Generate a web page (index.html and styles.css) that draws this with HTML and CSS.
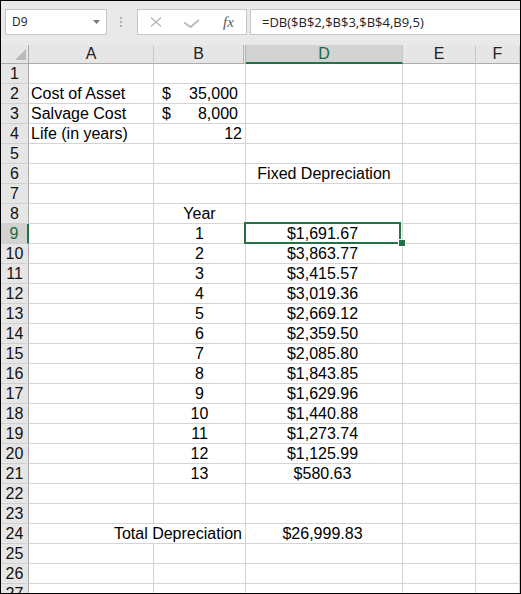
FILE: index.html
```html
<!DOCTYPE html>
<html>
<head>
<meta charset="utf-8">
<link rel="stylesheet" href="styles.css">
</head>
<body>
<div class="app">
  <div class="fbar">
    <div class="namebox"><span>D9</span><svg class="dd" width="7" height="4" viewBox="0 0 7 4"><polygon points="0,0 7,0 3.5,4" fill="#7a7a7a"/></svg></div>
    <div class="dots"><i></i><i></i><i></i></div>
    <div class="btns">
      <svg class="ico-x" width="12" height="10" viewBox="0 0 12 10"><path d="M1 0.5 L11 9.5 M11 0.5 L1 9.5" stroke="#b4b4b4" stroke-width="1.3" fill="none"/></svg>
      <svg class="ico-ok" width="17" height="9" viewBox="0 0 17 9"><polyline points="1,3.5 7.5,8 16,1" stroke="#bcbcbc" stroke-width="2" fill="none"/></svg>
      <span class="fx">fx</span>
    </div>
    <div class="formula">=DB($B$2,$B$3,$B$4,B9,5)</div>
  </div>
  <div class="grid">
    <div class="hd corner"><svg width="11" height="11" viewBox="0 0 11 11"><polygon points="11,0 11,11 0,11" fill="#bababa"/></svg></div>
    <div class="hd">A</div>
    <div class="hd hb">B</div>
    <div class="hd on">D</div>
    <div class="hd">E</div>
    <div class="hd">F</div>

    <div class="rh">1</div><div class="c"></div><div class="c"></div><div class="c"></div><div class="c"></div><div class="c"></div>
    <div class="rh">2</div><div class="c">Cost of Asset</div><div class="c acc"><span>$</span><span>35,000</span></div><div class="c"></div><div class="c"></div><div class="c"></div>
    <div class="rh">3</div><div class="c">Salvage Cost</div><div class="c acc"><span>$</span><span>8,000</span></div><div class="c"></div><div class="c"></div><div class="c"></div>
    <div class="rh">4</div><div class="c">Life (in years)</div><div class="c r">12</div><div class="c"></div><div class="c"></div><div class="c"></div>
    <div class="rh">5</div><div class="c"></div><div class="c"></div><div class="c"></div><div class="c"></div><div class="c"></div>
    <div class="rh">6</div><div class="c"></div><div class="c"></div><div class="c ct">Fixed Depreciation</div><div class="c"></div><div class="c"></div>
    <div class="rh">7</div><div class="c"></div><div class="c"></div><div class="c"></div><div class="c"></div><div class="c"></div>
    <div class="rh">8</div><div class="c"></div><div class="c ct">Year</div><div class="c"></div><div class="c"></div><div class="c"></div>
    <div class="rh on">9</div><div class="c"></div><div class="c ct">1</div><div class="c cm">$1,691.67</div><div class="c"></div><div class="c"></div>
    <div class="rh">10</div><div class="c"></div><div class="c ct">2</div><div class="c cm">$3,863.77</div><div class="c"></div><div class="c"></div>
    <div class="rh">11</div><div class="c"></div><div class="c ct">3</div><div class="c cm">$3,415.57</div><div class="c"></div><div class="c"></div>
    <div class="rh">12</div><div class="c"></div><div class="c ct">4</div><div class="c cm">$3,019.36</div><div class="c"></div><div class="c"></div>
    <div class="rh">13</div><div class="c"></div><div class="c ct">5</div><div class="c cm">$2,669.12</div><div class="c"></div><div class="c"></div>
    <div class="rh">14</div><div class="c"></div><div class="c ct">6</div><div class="c cm">$2,359.50</div><div class="c"></div><div class="c"></div>
    <div class="rh">15</div><div class="c"></div><div class="c ct">7</div><div class="c cm">$2,085.80</div><div class="c"></div><div class="c"></div>
    <div class="rh">16</div><div class="c"></div><div class="c ct">8</div><div class="c cm">$1,843.85</div><div class="c"></div><div class="c"></div>
    <div class="rh">17</div><div class="c"></div><div class="c ct">9</div><div class="c cm">$1,629.96</div><div class="c"></div><div class="c"></div>
    <div class="rh">18</div><div class="c"></div><div class="c ct">10</div><div class="c cm">$1,440.88</div><div class="c"></div><div class="c"></div>
    <div class="rh">19</div><div class="c"></div><div class="c ct">11</div><div class="c cm">$1,273.74</div><div class="c"></div><div class="c"></div>
    <div class="rh">20</div><div class="c"></div><div class="c ct">12</div><div class="c cm">$1,125.99</div><div class="c"></div><div class="c"></div>
    <div class="rh">21</div><div class="c"></div><div class="c ct">13</div><div class="c cm">$580.63</div><div class="c"></div><div class="c"></div>
    <div class="rh">22</div><div class="c"></div><div class="c"></div><div class="c"></div><div class="c"></div><div class="c"></div>
    <div class="rh">23</div><div class="c"></div><div class="c"></div><div class="c"></div><div class="c"></div><div class="c"></div>
    <div class="rh">24</div><div class="c r span2">Total Depreciation</div><div class="c cm">$26,999.83</div><div class="c"></div><div class="c"></div>
    <div class="rh">25</div><div class="c"></div><div class="c"></div><div class="c"></div><div class="c"></div><div class="c"></div>
    <div class="rh">26</div><div class="c"></div><div class="c"></div><div class="c"></div><div class="c"></div><div class="c"></div>
    <div class="rh">27</div><div class="c"></div><div class="c"></div><div class="c"></div><div class="c"></div><div class="c"></div>
  </div>
  <div class="sel"><i class="handle"></i></div>
</div>
</body>
</html>
```

FILE: styles.css
```css
html, body {
  margin: 0;
  padding: 0;
  background: #ffffff;
}

.app {
  position: relative;
  width: 521px;
  height: 594px;
  box-sizing: border-box;
  border: 1px solid #000000;
  overflow: hidden;
  background: #ffffff;
  font-family: "Liberation Sans", Arial, sans-serif;
  color: #000000;
}

/* ---------- formula bar ---------- */
.fbar {
  height: 44px;
  box-sizing: border-box;
  display: flex;
  align-items: flex-start;
  padding: 8px 0 0 4px;
  background: #e9e9e9;
  font-family: "Open Sans", "Noto Sans", sans-serif;
  color: #222222;
}

.namebox {
  width: 102px;
  height: 26px;
  box-sizing: border-box;
  border: 1px solid #c6c6c6;
  background: #ffffff;
  display: flex;
  align-items: center;
  padding: 0 6px 0 6px;
  font-size: 12px;
  line-height: 24px;
}

.namebox .dd {
  margin-left: auto;
  margin-top: -1px;
}

.dots {
  margin: 8px 0 0 13px;
  display: flex;
  flex-direction: column;
  gap: 2px;
}

.dots i {
  display: block;
  width: 2px;
  height: 2px;
  background: #b0b0b0;
}

.btns {
  margin-left: 15px;
  width: 110px;
  height: 26px;
  box-sizing: border-box;
  border: 1px solid #c6c6c6;
  background: #ffffff;
  display: flex;
  align-items: center;
}

.ico-x {
  margin-left: 12px;
}

.ico-ok {
  margin-left: 21px;
  margin-top: 2px;
}

.fx {
  margin-left: 23px;
  font-family: "Liberation Serif", "Times New Roman", serif;
  font-style: italic;
  font-size: 15px;
  color: #5a5a5a;
  line-height: 24px;
}

.formula {
  flex: 1;
  margin-left: 3px;
  height: 26px;
  box-sizing: border-box;
  border: 1px solid #c6c6c6;
  border-right: none;
  background: #ffffff;
  padding-left: 11px;
  font-size: 13px;
  line-height: 24px;
  white-space: nowrap;
}

/* ---------- grid ---------- */
.grid {
  display: grid;
  grid-template-columns: 28px 125px 92px 157px 73px 44px;
  grid-template-rows: 19px;
  grid-auto-rows: 20px;
  font-size: 16px;
}

.hd {
  background: #e6e6e6;
  border-right: 1px solid #c8c8c8;
  border-bottom: 1px solid #ababab;
  box-sizing: border-box;
  text-align: center;
  line-height: 18px;
  color: #222222;
}

.hd.corner {
  border-right-color: #ababab;
  display: flex;
  justify-content: flex-end;
  align-items: flex-end;
  padding: 0 2px 3px 0;
}

.hd.hb {
  border-right: 3px double #b5b5b5;
}

.hd.on {
  background: #d2d2d2;
  border-bottom: 2px solid #217346;
  line-height: 17px;
  color: #1d6b3b;
}

.rh {
  background: #e6e6e6;
  border-right: 1px solid #ababab;
  border-bottom: 1px solid #d0d0d0;
  box-sizing: border-box;
  text-align: center;
  line-height: 20px;
  overflow: hidden;
  color: #111111;
}

.rh.on {
  background: #d2d2d2;
  border-right: 2px solid #217346;
  color: #1d6b3b;
}

.c {
  border-right: 1px solid #d4d4d4;
  border-bottom: 1px solid #d4d4d4;
  box-sizing: border-box;
  padding: 0 2px;
  line-height: 20px;
  white-space: nowrap;
  overflow: hidden;
}

.c.r {
  text-align: right;
  padding-right: 3px;
}

.c.ct {
  text-align: center;
}

.c.cm {
  text-align: center;
  padding-right: 5px;
}

.c.acc {
  display: flex;
  justify-content: space-between;
  padding: 0 7px 0 8px;
}

.span2 {
  grid-column: span 2;
}

/* ---------- selection overlay ---------- */
.sel {
  position: absolute;
  left: 243px;
  top: 221px;
  width: 157px;
  height: 22px;
  box-sizing: border-box;
  border: 2px solid #217346;
}

.handle {
  position: absolute;
  left: 152px;
  top: 15px;
  width: 6px;
  height: 6px;
  background: #217346;
  border: 1px solid #ffffff;
}
```
